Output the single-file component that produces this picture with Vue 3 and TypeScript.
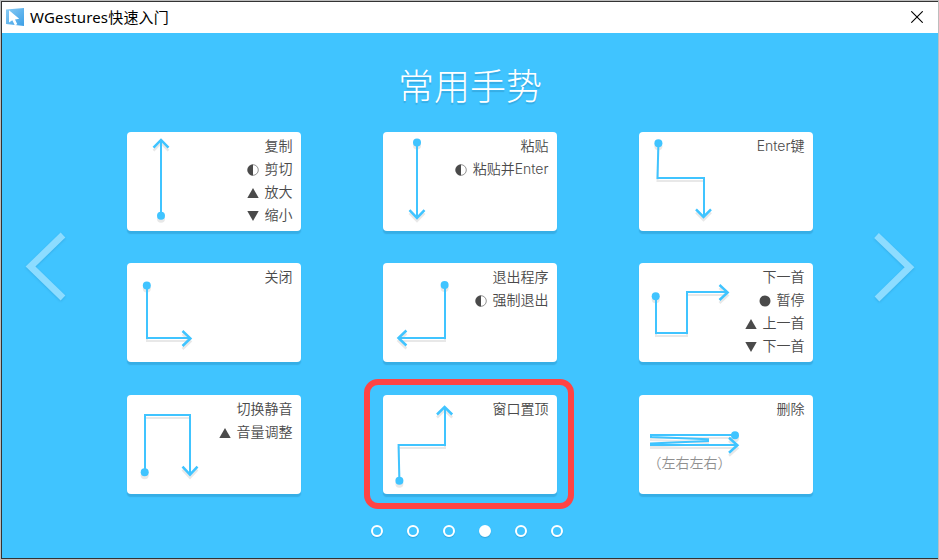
<script setup lang="ts">
type Mark = 'half' | 'up' | 'down' | 'dot'

interface Action {
  text: string
  mark?: Mark
}

interface Gesture {
  id: string
  start: [number, number]
  line: string
  head: string
  actions: Action[]
  caption?: string
  highlighted?: boolean
}

const gestures: Gesture[] = [
  {
    id: 'copy',
    start: [34, 83.7],
    line: 'M34 83.5V8',
    head: 'M26.5 15.7L34 8L41.5 15.7',
    actions: [
      { text: '复制' },
      { text: '剪切', mark: 'half' },
      { text: '放大', mark: 'up' },
      { text: '缩小', mark: 'down' },
    ],
  },
  {
    id: 'paste',
    start: [34, 10.4],
    line: 'M34 10V86',
    head: 'M26.5 78.2L34 85.9L41.5 78.2',
    actions: [{ text: '粘贴' }, { text: '粘贴并Enter', mark: 'half' }],
  },
  {
    id: 'enter',
    start: [19.4, 11.3],
    line: 'M19.4 11.3L18.5 46H65V84',
    head: 'M57 77.3L64.5 84.9L72 77.3',
    actions: [{ text: 'Enter键' }],
  },
  {
    id: 'close',
    start: [19.8, 22.4],
    line: 'M20 22V75H63',
    head: 'M55.5 68L63.4 75.4L55.5 83',
    actions: [{ text: '关闭' }],
  },
  {
    id: 'quit',
    start: [61.6, 22],
    line: 'M62 22V75H15.5',
    head: 'M23.4 67.5L15.5 75L23.4 82.5',
    actions: [{ text: '退出程序' }, { text: '强制退出', mark: 'half' }],
  },
  {
    id: 'next',
    start: [16.7, 33.2],
    line: 'M17 33V70H48V29H88',
    head: 'M80.5 22L88.6 29.4L80.5 37',
    actions: [
      { text: '下一首' },
      { text: '暂停', mark: 'dot' },
      { text: '上一首', mark: 'up' },
      { text: '下一首', mark: 'down' },
    ],
  },
  {
    id: 'mute',
    start: [17.7, 77.2],
    line: 'M18 77V20H63V79',
    head: 'M55.5 71.7L63 79.7L70.5 71.7',
    actions: [{ text: '切换静音' }, { text: '音量调整', mark: 'up' }],
  },
  {
    id: 'topmost',
    start: [16.4, 85.7],
    line: 'M16.4 85.7L15.6 50H62V12',
    head: 'M54 19.5L61.6 12L69.2 19.5',
    actions: [{ text: '窗口置顶' }],
    highlighted: true,
  },
  {
    id: 'delete',
    start: [96, 40.2],
    line: 'M96 40H12V42L69 44.3V46L12 48.5V50H98',
    head: 'M90 42.8L98.4 50.3L90 57.8',
    actions: [{ text: '删除' }],
    caption: '（左右左右）',
  },
]

const pageCount = 6
const currentPage = 4
</script>

<template>
  <div class="window">
    <header class="titlebar">
      <svg class="logo" viewBox="0 0 20 20">
        <defs>
          <linearGradient id="logoFill" x1="0" y1="0" x2="1" y2="1">
            <stop offset="0" stop-color="#8accf5" />
            <stop offset="1" stop-color="#3c9fe6" />
          </linearGradient>
        </defs>
        <path d="M1 2.5L19 1V19L1 17Z" fill="url(#logoFill)" />
        <path d="M4 3.2V15.6L7.3 13.2L9.8 18.3L12.3 17.2L10 12.4L14.2 11.8Z" fill="#fff" />
      </svg>
      <span class="caption-text">WGestures快速入门</span>
      <svg class="close" viewBox="0 0 12 12">
        <path d="M0.3 0.3L11.7 11.7M11.7 0.3L0.3 11.7" />
      </svg>
    </header>

    <main class="stage">
      <svg class="nav" viewBox="0 0 44 74">
        <path d="M40 5L7.5 36.5L40 68" />
      </svg>

      <section class="page">
        <h1>常用手势</h1>
        <div class="grid">
          <article
            v-for="g in gestures"
            :key="g.id"
            class="card"
            :class="{ highlighted: g.highlighted }"
          >
            <svg class="gesture" viewBox="0 0 174 99">
              <path :d="g.line" />
              <path class="head" :d="g.head" />
              <circle :cx="g.start[0]" :cy="g.start[1]" r="4" />
            </svg>
            <ul>
              <li v-for="(a, i) in g.actions" :key="i">
                <svg v-if="a.mark" class="mark" viewBox="0 0 14 14">
                  <template v-if="a.mark === 'half'">
                    <circle cx="7" cy="7" r="5.3" fill="none" stroke="#4a4a4a" stroke-width="0.6" />
                    <path d="M7 1.5A5.5 5.5 0 0 0 7 12.5Z" />
                  </template>
                  <path v-else-if="a.mark === 'up'" d="M7 2L12.7 12H1.3Z" />
                  <path v-else-if="a.mark === 'down'" d="M7 12L12.7 2H1.3Z" />
                  <circle v-else cx="7" cy="7" r="5.5" />
                </svg>
                <span>{{ a.text }}</span>
              </li>
            </ul>
            <p v-if="g.caption">{{ g.caption }}</p>
          </article>
        </div>
        <nav class="pager">
          <i v-for="n in pageCount" :key="n" :class="{ active: n === currentPage }"></i>
        </nav>
      </section>

      <svg class="nav" viewBox="0 0 44 74">
        <path d="M4.5 5.5L37.5 37.2L5 69" />
      </svg>
    </main>
  </div>
</template>

<style>
body {
  background: #bdbdbd;
  overflow: hidden;
}
</style>

<style scoped>
.window {
  box-sizing: border-box;
  width: 938px;
  height: 559px;
  padding: 1px 0 0 1px;
  display: flex;
  flex-direction: column;
  position: relative;
  font-family: Inter, 'Noto Sans CJK SC', sans-serif;
}
.titlebar {
  box-sizing: border-box;
  height: 32px;
  display: flex;
  align-items: center;
  padding: 0 15px 2px 3px;
  border-top: 1px solid #333;
  border-left: 1px solid #333;
  background: #fff;
}
.logo {
  width: 20px;
  height: 20px;
}
.caption-text {
  flex: 1;
  margin-left: 5px;
  padding-top: 1px;
  font-family: 'Noto Sans', 'Noto Sans CJK SC', sans-serif;
  font-size: 15px;
  line-height: 29px;
  letter-spacing: 0.18px;
  color: #000;
}
.close {
  width: 12px;
  height: 12px;
}
.close path {
  fill: none;
  stroke: #000;
  stroke-width: 1.1;
}
.stage {
  flex: 1;
  box-sizing: border-box;
  display: flex;
  justify-content: space-between;
  padding: 0 22px 0 21px;
  border-left: 1px solid #333;
  border-bottom: 1px solid #333;
  background: #40c4ff;
}
.nav {
  width: 44px;
  height: 74px;
  margin-top: 197px;
  filter: drop-shadow(0 1px 1px rgba(0, 80, 130, 0.18));
}
.nav path {
  fill: none;
  stroke: #8ddcff;
  stroke-width: 6.8;
}
.page {
  width: 686px;
  display: flex;
  flex-direction: column;
  align-items: center;
}
h1 {
  margin: 28px 0 0;
  padding-left: 1px;
  height: 71px;
  font-size: 36px;
  line-height: 53px;
  font-weight: 300;
  color: #fff;
  text-shadow: 0 2px 1px rgba(0, 60, 100, 0.18);
}
.grid {
  display: grid;
  grid-template-columns: repeat(3, 174px);
  grid-template-rows: 131px 132px 99px;
  column-gap: 82px;
}
.card {
  position: relative;
  height: 99px;
  border-radius: 4px;
  background: #fff;
  box-shadow: 0 3px 1px rgba(0, 60, 100, 0.16);
}
.card.highlighted::after {
  content: '';
  position: absolute;
  inset: -16px -17px -15px -19px;
  border: 6px solid #ff4444;
  border-radius: 14px;
}
.gesture {
  position: absolute;
  inset: 0;
  width: 174px;
  height: 99px;
  filter: drop-shadow(0 3px 0 rgba(0, 0, 0, 0.09));
}
.gesture path {
  fill: none;
  stroke: #40c4ff;
  stroke-width: 2;
}
.gesture .head {
  stroke-width: 2.5;
}
.gesture circle {
  fill: #40c4ff;
}
ul {
  margin: 0;
  padding: 3px 8px 0 0;
  list-style: none;
}
li {
  display: flex;
  justify-content: flex-end;
  align-items: center;
  height: 23px;
  font-size: 14px;
  line-height: 21px;
  font-weight: 350;
  color: #4a4a4a;
}
li span {
  padding-bottom: 2px;
}
.mark {
  width: 14px;
  height: 14px;
  margin: 0 4.6px 0 0;
  fill: #4a4a4a;
}
p {
  position: absolute;
  left: 9px;
  top: 57px;
  margin: 0;
  font-size: 14px;
  line-height: 22px;
  font-weight: 350;
  color: #909090;
}
.pager {
  display: flex;
  gap: 24px;
  margin-top: 31px;
  padding-right: 6px;
  margin-left: 0;
}
.pager i {
  box-sizing: border-box;
  width: 12px;
  height: 12px;
  border: 2px solid #fff;
  border-radius: 50%;
  box-shadow: 0 1px 1px rgba(0, 60, 100, 0.22);
}
.pager i.active {
  background: #fff;
}
</style>
